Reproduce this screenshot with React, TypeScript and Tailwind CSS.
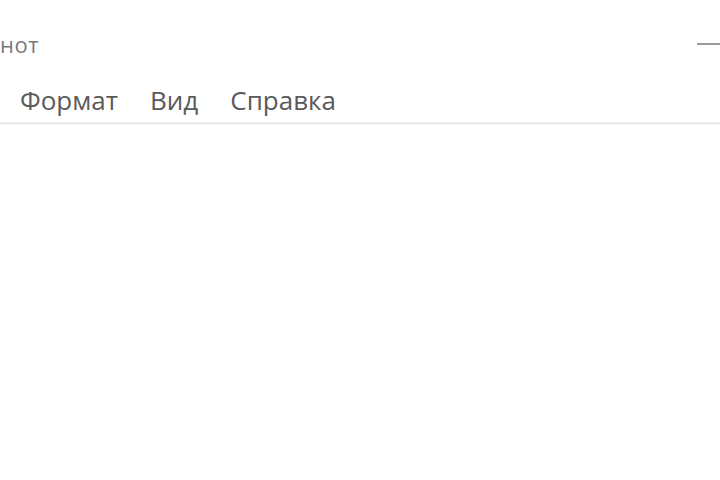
export default function App() {
  return (
    <div
      className="w-[720px] h-[480px] bg-white overflow-hidden flex flex-col"
      style={{ fontFamily: '"Open Sans", "Noto Sans", sans-serif' }}
    >
      {/* Title bar */}
      <div className="h-[86px] flex items-start justify-between">
        <span className="mt-[28px] text-[22px] text-[#7a7a7a] tracking-[0.6px]">нот</span>
        <div className="mt-[43px] w-[23px] h-[2px] bg-[#9a9a9a]" />
      </div>

      {/* Menu */}
      <div className="h-[36px] flex items-start gap-[32px] pl-[20px] text-[26px] leading-none text-[#5a5a5a]">
        <span className="mt-[1px]">Формат</span>
        <span className="mt-[1px]">Вид</span>
        <span className="mt-[1px]">Справка</span>
      </div>
      <div className="h-[3px] bg-[#ececec] border-b border-[#f6f6f6]" />

      {/* Text area */}
      <div className="flex-1 bg-white" />
    </div>
  );
}
